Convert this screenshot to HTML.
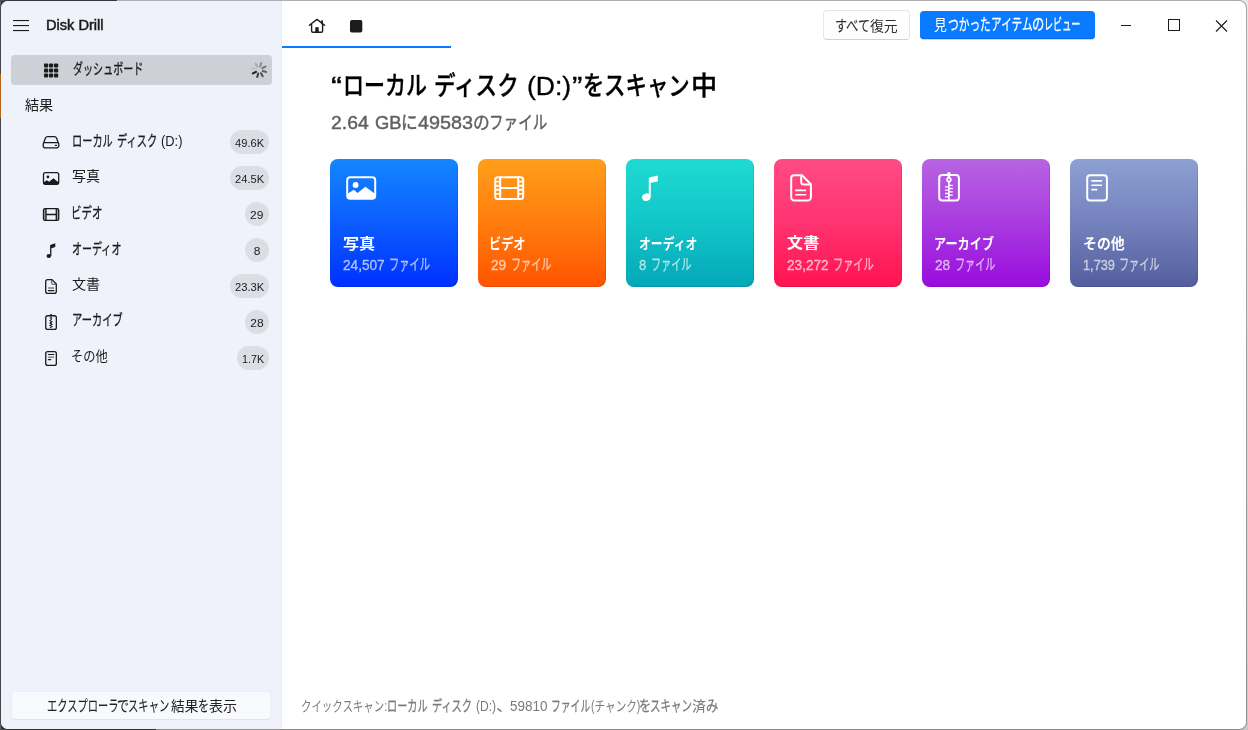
<!DOCTYPE html>
<html lang="ja">
<head>
<meta charset="utf-8">
<title>Disk Drill</title>
<style>
html,body{margin:0;padding:0}
body{width:1248px;height:730px;overflow:hidden;position:relative;background:linear-gradient(180deg,#e8e8e9,#c9c9c9);
 font-family:'Liberation Sans','Noto Sans CJK JP',sans-serif}
#frame-l{position:absolute;left:0;top:0;width:1px;height:730px;background:#5f6269}
#frame-o{position:absolute;left:0;top:74px;width:1px;height:44px;background:#f88a28}
#frame-t{position:absolute;left:0;top:0;width:117px;height:1px;background:#4c4e52}
#frame-c1{position:absolute;left:0;top:0;width:9px;height:9px;background:#3c3e42}
#frame-c2{position:absolute;left:0;top:721px;width:9px;height:9px;background:#36383b}
#frame-b{position:absolute;left:0;top:729px;width:156px;height:1px;background:#45474a}
#frame-b2{position:absolute;left:156px;top:729px;width:1092px;height:1px;background:#c4c4c4}
#frame-t2{position:absolute;left:117px;top:0;width:1120px;height:1px;background:#f0f0f0}
#app{position:absolute;left:0;top:0;width:1247px;height:730px;box-sizing:border-box;border:1px solid rgba(0,0,0,.27);border-radius:8px;overflow:hidden;background:#fff;background-clip:padding-box}
#app>*{position:absolute}
#side{left:0;top:0;width:280px;height:728px;background:#eff2fa}
#sep{left:280px;top:0;width:1px;height:728px;background:#ebebea}
.sel{left:10px;top:54px;width:261px;height:30px;border-radius:4px;background:#cdd0d6}
.pill{height:24px;border-radius:12px;background:#dcdee5}
.btn{box-sizing:border-box;border-radius:4px}
#b-exp{left:10px;top:689.5px;width:260px;height:29px;background:#f9fafd;border:1px solid #eceef4;border-bottom-color:#e2e4ea}
#b-all{left:822px;top:9px;width:87px;height:30px;background:#fefefe;border:1px solid #e6e6e6;border-bottom-color:#d2d2d2}
#b-rev{left:919px;top:10px;width:175px;height:28px;background:#0a7bff;box-shadow:inset 0 -1px 0 #0a6fe6, 0 1px 0 rgba(10,100,220,.25)}
#tabline{left:281px;top:45px;width:169px;height:2px;background:#0a78ff}
.card{top:158px;width:128px;height:128px;border-radius:8px;box-shadow:inset -1px -1px 0 rgba(0,0,60,.10)}
#c1{left:329px;background:linear-gradient(180deg,#1586ff 0%,#0b5dff 50%,#0030ff 100%)}
#c2{left:477px;background:linear-gradient(180deg,#ff9e1a 0%,#ff7d0e 50%,#ff5400 100%)}
#c3{left:625px;background:linear-gradient(180deg,#1fdad3 0%,#12c6c8 50%,#04a7b8 100%)}
#c4{left:773px;background:linear-gradient(180deg,#ff4c86 0%,#ff3370 50%,#ff1350 100%)}
#c5{left:921px;background:linear-gradient(180deg,#b764e2 0%,#a93be0 50%,#990cde 100%)}
#c6{left:1069px;background:linear-gradient(180deg,#8da0d3 0%,#7482bd 50%,#545e9f 100%)}
#ico{left:-1px;top:-1px;width:1248px;height:730px}
#text{left:-1px;top:-1px;width:1248px;height:730px;will-change:transform}
.t{position:absolute;white-space:pre;line-height:1;transform-origin:0 0;display:block}
</style>
</head>
<body>
<div id="frame-c1"></div><div id="frame-c2"></div><div id="frame-l"></div><div id="frame-o"></div><div id="frame-t"></div><div id="frame-b"></div><div id="frame-b2"></div><div id="frame-t2"></div>
<div id="app">
<div id="side"></div><div id="sep"></div>
<div class="sel"></div>
<div class="pill" style="left:229px;top:129px;width:39px"></div><div class="pill" style="left:229px;top:165px;width:39px"></div><div class="pill" style="left:244px;top:201px;width:24px"></div><div class="pill" style="left:244px;top:237px;width:24px"></div><div class="pill" style="left:229px;top:273px;width:39px"></div><div class="pill" style="left:244px;top:309px;width:24px"></div><div class="pill" style="left:236px;top:345px;width:32px"></div>
<div id="b-exp" class="btn"></div>
<div id="tabline"></div>
<div id="b-all" class="btn"></div>
<div id="b-rev" class="btn"></div>
<div id="c1" class="card"></div>
<div id="c2" class="card"></div>
<div id="c3" class="card"></div>
<div id="c4" class="card"></div>
<div id="c5" class="card"></div>
<div id="c6" class="card"></div>
<svg id="ico" width="1248" height="730" viewBox="0 0 1248 730">
<rect x="13" y="20" width="16" height="1.1" fill="#1b1b1b"/>
<rect x="13" y="25" width="16" height="1.1" fill="#1b1b1b"/>
<rect x="13" y="30" width="16" height="1.1" fill="#1b1b1b"/>
<rect x="44" y="63.4" width="4.2" height="4.2" rx="1" fill="#1b1b1b"/>
<rect x="44" y="68.4" width="4.2" height="4.2" rx="1" fill="#1b1b1b"/>
<rect x="44" y="73.4" width="4.2" height="4.2" rx="1" fill="#1b1b1b"/>
<rect x="49" y="63.4" width="4.2" height="4.2" rx="1" fill="#1b1b1b"/>
<rect x="49" y="68.4" width="4.2" height="4.2" rx="1" fill="#1b1b1b"/>
<rect x="49" y="73.4" width="4.2" height="4.2" rx="1" fill="#1b1b1b"/>
<rect x="54" y="63.4" width="4.2" height="4.2" rx="1" fill="#1b1b1b"/>
<rect x="54" y="68.4" width="4.2" height="4.2" rx="1" fill="#1b1b1b"/>
<rect x="54" y="73.4" width="4.2" height="4.2" rx="1" fill="#1b1b1b"/>
<line x1="262.76" y1="71.02" x2="266.12" y2="71.98" stroke="#606060" stroke-width="2.0" stroke-linecap="round"/>
<line x1="260.99" y1="73.24" x2="262.69" y2="76.30" stroke="#4f4f4f" stroke-width="2.0" stroke-linecap="round"/>
<line x1="258.18" y1="73.56" x2="257.22" y2="76.92" stroke="#3d3d3d" stroke-width="2.0" stroke-linecap="round"/>
<line x1="255.96" y1="71.79" x2="252.90" y2="73.49" stroke="#1f1f1f" stroke-width="2.0" stroke-linecap="round"/>
<line x1="255.64" y1="68.98" x2="252.28" y2="68.02" stroke="#c0c2c7" stroke-width="2.0" stroke-linecap="round"/>
<line x1="257.41" y1="66.76" x2="255.71" y2="63.70" stroke="#a8a8a8" stroke-width="2.0" stroke-linecap="round"/>
<line x1="260.22" y1="66.44" x2="261.18" y2="63.08" stroke="#8c8c8c" stroke-width="2.0" stroke-linecap="round"/>
<line x1="262.44" y1="68.21" x2="265.50" y2="66.51" stroke="#747474" stroke-width="2.0" stroke-linecap="round"/>
<path fill="none" stroke="#1b1b1b" stroke-width="1.3" stroke-linejoin="round" stroke-linecap="round" d="M47.7 136.7h6.6c1.1 0 1.9.6 2.3 1.6l1.9 4.9c.2.5.3 1 .3 1.5v.7a2.5 2.5 0 0 1-2.5 2.5h-10.6a2.5 2.5 0 0 1-2.5-2.5v-.7c0-.5.1-1 .3-1.5l1.9-4.9c.4-1 1.2-1.6 2.3-1.6zM43.9 142.6h14.2"/>
<path fill="none" stroke="#1b1b1b" stroke-width="1.3" stroke-linejoin="round" stroke-linecap="round" d="M55.3 145.4h1.2"/>
<rect fill="none" stroke="#1b1b1b" stroke-width="1.3" stroke-linejoin="round" stroke-linecap="round" x="43.5" y="172.6" width="15.2" height="11.7" rx="2"/>
<circle cx="47.9" cy="176.9" r="1.4" fill="#1b1b1b"/>
<path fill="#1b1b1b" d="M43.5 182.6L46.8 180.2L49.2 181.7L53.4 178.2L58.7 182.6V184.3H43.5Z"/>
<rect fill="none" stroke="#1b1b1b" stroke-width="1.3" stroke-linejoin="round" stroke-linecap="round" x="43.5" y="208.7" width="15.2" height="11.7" rx="1.5"/>
<path fill="none" stroke="#1b1b1b" stroke-width="1.3" stroke-linejoin="round" stroke-linecap="round" d="M46 208.7v11.7M56.3 208.7v11.7M46 214.5h10.3"/>
<path fill="#1b1b1b" fill-opacity=".38" d="M43.5 209h2.5v11h-2.5zM56.3 209h2.4v11h-2.4z"/>
<ellipse cx="48.8" cy="256" rx="2.3" ry="2" fill="#1b1b1b"/>
<path fill="#1b1b1b" d="M50.1 245L55.3 243.3V247L51.4 248.2V256H50.1Z"/>
<path fill="none" stroke="#1b1b1b" stroke-width="1.3" stroke-linejoin="round" stroke-linecap="round" d="M47.7 279.6H52L56.3 284V291.4a2 2 0 0 1-2 2H47.7a2 2 0 0 1-2-2V281.6a2 2 0 0 1 2-2z"/>
<path fill="none" stroke="#6a6a6a" stroke-width="1.3" d="M51.6 280V282.8a1.5 1.5 0 0 0 1.5 1.5H56"/>
<path fill="none" stroke="#7a7a7a" stroke-width="1.5" d="M48.2 288H54"/>
<path fill="none" stroke="#1b1b1b" stroke-width="1.2" stroke-linecap="round" d="M48.4 290.7H53.8"/>
<rect fill="none" stroke="#1b1b1b" stroke-width="1.3" stroke-linejoin="round" stroke-linecap="round" x="45.75" y="315.75" width="10.6" height="13.7" rx="2"/>
<circle cx="51" cy="315" r="1.1" fill="#1b1b1b"/>
<circle cx="51" cy="317.9" r="1.3" fill="#555"/>
<polyline fill="none" stroke="#1b1b1b" stroke-width="1.1" points="51.8,319.4 50,320.6 52,321.8 50,323 52,324.2 50,325.4 52,326.6 50,327.8"/>
<rect fill="none" stroke="#1b1b1b" stroke-width="1.3" stroke-linejoin="round" stroke-linecap="round" x="45.75" y="351.55" width="10.6" height="13.9" rx="2"/>
<path fill="none" stroke="#1b1b1b" stroke-width="1.2" stroke-linecap="round" d="M48.4 354.5H53.8M48.4 359.6H50.8"/>
<path fill="none" stroke="#8a8a8a" stroke-width="1.6" d="M48.2 357.2H54"/>
<path fill="none" stroke="#1b1b1b" stroke-width="1.4" stroke-linejoin="round" stroke-linecap="round" d="M309.4 25.3L317 19.4L324.6 25.3M311.6 24V31a1.3 1.3 0 0 0 1.3 1.3H321.3a1.3 1.3 0 0 0 1.3-1.3V24"/>
<rect x="315.3" y="27.2" width="3.4" height="5" fill="#1b1b1b"/>
<rect x="321.2" y="20.3" width="1.7" height="4" fill="#1b1b1b"/>
<rect x="350" y="20.1" width="12.3" height="12.5" rx="1.8" fill="#1c1c1c"/>
<rect x="1121" y="25" width="10" height="1" fill="#1b1b1b"/>
<rect x="1168.5" y="19.5" width="11" height="11" fill="none" stroke="#1b1b1b" stroke-width="1"/>
<path d="M1216 20.5L1227 31.5M1227 20.5L1216 31.5" fill="none" stroke="#1b1b1b" stroke-width="1.1"/>
<rect fill="none" stroke="#fff" stroke-width="2" stroke-linejoin="round" stroke-linecap="round" x="347.2" y="177.2" width="28" height="21.6" rx="3"/>
<circle cx="355.6" cy="185" r="2.9" fill="#fff"/>
<path fill="#fff" d="M347.5 193.8L353.9 189.8L357.5 192.9L365.4 186.8L375 193.8V198.5H347.5Z"/>
<rect fill="none" stroke="#fff" stroke-width="2" stroke-linejoin="round" stroke-linecap="round" x="495.2" y="177.2" width="28" height="21.7" rx="2.5"/>
<path fill="none" stroke="#fff" stroke-width="2" stroke-linejoin="round" stroke-linecap="round" d="M500.2 177.2v21.7M518.2 177.2v21.7M500.2 187.9h18"/>
<path fill="none" stroke="#fff" stroke-width="1.9" d="M495.5 181.6h4.5M518.5 181.6h4.5M495.5 185.7h4.5M518.5 185.7h4.5M495.5 189.8h4.5M518.5 189.8h4.5M495.5 193.9h4.5M518.5 193.9h4.5"/>
<ellipse cx="646.3" cy="197.2" rx="4.25" ry="3.65" fill="#fff" transform="rotate(-18 646.3 197.2)"/>
<path fill="#fff" d="M648.8 178.4q0-1 1-1.2L657.8 175.6V181.4L650.8 182.8V197H648.8Z"/>
<path fill="none" stroke="#fff" stroke-width="2" stroke-linejoin="round" stroke-linecap="round" d="M794.2 175.3H802L810.9 184.2V197.4a3 3 0 0 1-3 3H794.2a3 3 0 0 1-3-3V178.3a3 3 0 0 1 3-3z"/>
<path fill="none" stroke="#fff" stroke-width="2" stroke-linejoin="round" stroke-linecap="round" d="M801.2 175.6V182a2.5 2.5 0 0 0 2.5 2.5H810.6"/>
<path fill="none" stroke="#fff" stroke-width="1.6" d="M795.2 190.4H806.1M795.2 194.7H806.1"/>
<rect fill="none" stroke="#fff" stroke-width="2" stroke-linejoin="round" stroke-linecap="round" x="939.2" y="175" width="19.7" height="25.4" rx="3"/>
<circle cx="948.9" cy="173.7" r="1.7" fill="#fff"/>
<path fill="none" stroke="#fff" stroke-width="2.6" d="M948.9 175V178"/>
<circle cx="948.9" cy="179.8" r="1.9" fill="none" stroke="#fff" stroke-width="1.7"/>
<path fill="none" stroke="#fff" stroke-width="1.6" d="M948.9 182V200"/>
<path fill="none" stroke="#fff" stroke-width="1.3" d="M948.9 185.3H952.8M948.9 188.5H952.8M948.9 191.9H952.8M948.9 195.2H952.8M945 186.9H948.9M945 190.2H948.9M945 193.5H948.9M945 196.8H948.9"/>
<rect fill="none" stroke="#fff" stroke-width="2" stroke-linejoin="round" stroke-linecap="round" x="1087.2" y="175.3" width="19.7" height="25.1" rx="3"/>
<path fill="none" stroke="#fff" stroke-width="1.6" d="M1091.4 180.9H1102.1M1091.4 185.3H1102.1M1091.4 189.6H1097.2"/>
</svg>
<div id="text">
<span class="t" style="left:45.72px;top:17.95px;font-size:14px;font-weight:400;color:#1b1b1b;-webkit-text-stroke:0.5px;transform-origin:0 12px;transform:scale(1.0419,1.0000)">Disk Drill</span>
<span class="t" style="left:72.76px;top:61.66px;font-size:14px;font-weight:400;color:#1b1b1b;-webkit-text-stroke:0.25px;transform-origin:0 12px;transform:scale(0.7183,1.0900)">ダッシュボード</span>
<span class="t" style="left:25.29px;top:98.48px;font-size:14px;font-weight:400;color:#1b1b1b;transform-origin:0 12px;transform:scale(1.0089,1.0000)">結果</span>
<span class="t" style="left:71.62px;top:133.55px;font-size:14px;font-weight:400;color:#1b1b1b;-webkit-text-stroke:0.25px;transform-origin:0 12px;transform:scale(0.7283,1.0900)">ローカル</span>
<span class="t" style="left:117.17px;top:133.55px;font-size:14px;font-weight:400;color:#1b1b1b;-webkit-text-stroke:0.25px;transform-origin:0 12px;transform:scale(0.7330,1.0900)">ディスク</span>
<span class="t" style="left:161.04px;top:133.55px;font-size:14px;font-weight:400;color:#1b1b1b;transform-origin:0 12px;transform:scale(0.9200,1.0000)">(D:)</span>
<span class="t" style="left:71.59px;top:169.22px;font-size:14px;font-weight:400;color:#1b1b1b;transform-origin:0 12px;transform:scale(1.0035,1.0000)">写真</span>
<span class="t" style="left:71.16px;top:205.50px;font-size:14px;font-weight:400;color:#1b1b1b;-webkit-text-stroke:0.25px;transform-origin:0 12px;transform:scale(0.7459,1.0900)">ビデオ</span>
<span class="t" style="left:72.28px;top:241.85px;font-size:14px;font-weight:400;color:#1b1b1b;-webkit-text-stroke:0.25px;transform-origin:0 12px;transform:scale(0.7161,1.0900)">オーディオ</span>
<span class="t" style="left:71.90px;top:277.27px;font-size:14px;font-weight:400;color:#1b1b1b;transform-origin:0 12px;transform:scale(1.0047,1.0000)">文書</span>
<span class="t" style="left:71.81px;top:313.40px;font-size:14px;font-weight:400;color:#1b1b1b;-webkit-text-stroke:0.25px;transform-origin:0 12px;transform:scale(0.7335,1.0900)">アーカイブ</span>
<span class="t" style="left:71.19px;top:349.37px;font-size:14px;font-weight:400;color:#1b1b1b;transform-origin:0 12px;transform:scale(0.8750,1.0000)">その他</span>
<span class="t" style="left:234.77px;top:136.76px;font-size:12px;font-weight:400;color:#1b1b1b;transform-origin:0 10px;transform:scale(0.9274,0.9600)">49.6K</span>
<span class="t" style="left:235.04px;top:172.76px;font-size:12px;font-weight:400;color:#1b1b1b;transform-origin:0 10px;transform:scale(0.9282,0.9600)">24.5K</span>
<span class="t" style="left:250.21px;top:208.76px;font-size:12px;font-weight:400;color:#1b1b1b;transform-origin:0 10px;transform:scale(0.9991,0.9600)">29</span>
<span class="t" style="left:253.75px;top:244.76px;font-size:12px;font-weight:400;color:#1b1b1b;transform-origin:0 10px;transform:scale(1.0000,0.9600)">8</span>
<span class="t" style="left:234.53px;top:280.62px;font-size:12px;font-weight:400;color:#1b1b1b;transform-origin:0 10px;transform:scale(0.9350,0.9600)">23.3K</span>
<span class="t" style="left:250.25px;top:316.59px;font-size:12px;font-weight:400;color:#1b1b1b;transform-origin:0 10px;transform:scale(1.0000,0.9600)">28</span>
<span class="t" style="left:242.11px;top:352.76px;font-size:12px;font-weight:400;color:#1b1b1b;transform-origin:0 10px;transform:scale(0.8973,0.9600)">1.7K</span>
<span class="t" style="left:46.77px;top:698.76px;font-size:14px;font-weight:400;color:#222222;-webkit-text-stroke:0.1px;transform-origin:0 12px;transform:scale(0.7316,1.0900)">エクスプローラ</span>
<span class="t" style="left:117.15px;top:698.76px;font-size:14px;font-weight:400;color:#222222;-webkit-text-stroke:0.1px;transform-origin:0 12px;transform:scale(0.8542,1.0900)">で</span>
<span class="t" style="left:128.04px;top:698.76px;font-size:14px;font-weight:400;color:#222222;-webkit-text-stroke:0.1px;transform-origin:0 12px;transform:scale(0.7372,1.0900)">スキャン</span>
<span class="t" style="left:170.87px;top:698.76px;font-size:14px;font-weight:400;color:#222222;transform-origin:0 12px;transform:scale(0.9749,1.0000)">結果</span>
<span class="t" style="left:198.08px;top:698.76px;font-size:14px;font-weight:400;color:#222222;-webkit-text-stroke:0.1px;transform-origin:0 12px;transform:scale(0.7872,1.0900)">を</span>
<span class="t" style="left:209.00px;top:698.76px;font-size:14px;font-weight:400;color:#222222;transform-origin:0 12px;transform:scale(1.0000,1.0000)">表示</span>
<span class="t" style="left:835.26px;top:18.58px;font-size:14px;font-weight:400;color:#2e2e2e;-webkit-text-stroke:0.1px;transform-origin:0 12px;transform:scale(0.8683,1.0900)">すべて</span>
<span class="t" style="left:869.75px;top:18.58px;font-size:14px;font-weight:400;color:#2e2e2e;transform-origin:0 12px;transform:scale(0.9908,1.0000)">復元</span>
<span class="t" style="left:934.41px;top:17.53px;font-size:14px;font-weight:400;color:#ffffff;transform-origin:0 12px;transform:scale(0.9168,1.0400)">見</span>
<span class="t" style="left:948.23px;top:17.53px;font-size:14px;font-weight:400;color:#ffffff;-webkit-text-stroke:0.25px;transform-origin:0 12px;transform:scale(0.7648,1.1128)">つかった</span>
<span class="t" style="left:990.66px;top:17.53px;font-size:14px;font-weight:400;color:#ffffff;-webkit-text-stroke:0.25px;transform-origin:0 12px;transform:scale(0.7617,1.1128)">アイテム</span>
<span class="t" style="left:1032.14px;top:17.53px;font-size:14px;font-weight:400;color:#ffffff;-webkit-text-stroke:0.25px;transform-origin:0 12px;transform:scale(0.8788,1.1128)">の</span>
<span class="t" style="left:1044.05px;top:17.53px;font-size:14px;font-weight:400;color:#ffffff;-webkit-text-stroke:0.25px;transform-origin:0 12px;transform:scale(0.6489,1.1128)">レビュー</span>
<span class="t" style="left:331.30px;top:72.62px;font-size:26px;font-weight:500;color:#000000;-webkit-text-stroke:0.35px;transform-origin:0 22px;transform:scale(1.2686,1.0000)">“</span>
<span class="t" style="left:343.37px;top:72.62px;font-size:26px;font-weight:500;color:#000000;-webkit-text-stroke:0.35px;transform-origin:0 22px;transform:scale(0.8072,1.0000)">ローカル</span>
<span class="t" style="left:434.42px;top:72.62px;font-size:26px;font-weight:500;color:#000000;-webkit-text-stroke:0.35px;transform-origin:0 22px;transform:scale(0.8287,1.0000)">ディスク</span>
<span class="t" style="left:526.92px;top:72.62px;font-size:26px;font-weight:400;color:#000000;-webkit-text-stroke:0.35px;transform-origin:0 22px;transform:scale(1.0202,1.0000)">(D:)</span>
<span class="t" style="left:571.70px;top:72.62px;font-size:26px;font-weight:500;color:#000000;-webkit-text-stroke:0.35px;transform-origin:0 22px;transform:scale(1.2000,1.0000)">”</span>
<span class="t" style="left:582.97px;top:72.62px;font-size:26px;font-weight:500;color:#000000;-webkit-text-stroke:0.35px;transform-origin:0 22px;transform:scale(0.8140,1.0000)">を</span>
<span class="t" style="left:604.40px;top:72.62px;font-size:26px;font-weight:500;color:#000000;-webkit-text-stroke:0.35px;transform-origin:0 22px;transform:scale(0.8251,1.0000)">スキャン</span>
<span class="t" style="left:690.86px;top:72.62px;font-size:26px;font-weight:500;color:#000000;-webkit-text-stroke:0.35px;transform-origin:0 22px;transform:scale(1.0063,1.0000)">中</span>
<span class="t" style="left:331.40px;top:114.32px;font-size:18px;font-weight:400;color:#606060;-webkit-text-stroke:0.4px;transform-origin:0 15px;transform:scale(1.0746,1.0300)">2.64</span>
<span class="t" style="left:375.23px;top:114.32px;font-size:18px;font-weight:400;color:#606060;-webkit-text-stroke:0.4px;transform-origin:0 15px;transform:scale(1.0204,1.0300)">GB</span>
<span class="t" style="left:400.64px;top:114.32px;font-size:18px;font-weight:400;color:#606060;-webkit-text-stroke:0.4px;transform-origin:0 15px;transform:scale(0.9310,1.0300)">に</span>
<span class="t" style="left:417.68px;top:114.32px;font-size:18px;font-weight:400;color:#606060;-webkit-text-stroke:0.4px;transform-origin:0 15px;transform:scale(1.0990,1.0300)">49583</span>
<span class="t" style="left:472.70px;top:114.32px;font-size:18px;font-weight:400;color:#606060;-webkit-text-stroke:0.4px;transform-origin:0 15px;transform:scale(0.9333,1.0300)">の</span>
<span class="t" style="left:489.25px;top:114.32px;font-size:18px;font-weight:400;color:#606060;-webkit-text-stroke:0.4px;transform-origin:0 15px;transform:scale(0.8096,1.0300)">ファイル</span>
<span class="t" style="left:343.00px;top:235.55px;font-size:15px;font-weight:700;color:#ffffff;transform-origin:0 13px;transform:scale(1.0719,0.9700)">写真</span>
<span class="t" style="left:342.91px;top:257.83px;font-size:14px;font-weight:400;color:rgba(255,255,255,0.6);-webkit-text-stroke:0.3px;transform-origin:0 12px;transform:scale(0.9725,1.0200)">24,507</span>
<span class="t" style="left:388.97px;top:257.83px;font-size:14px;font-weight:400;color:rgba(255,255,255,0.6);-webkit-text-stroke:0.3px;transform-origin:0 12px;transform:scale(0.7321,1.1016)">ファイル</span>
<span class="t" style="left:489.29px;top:235.97px;font-size:15px;font-weight:700;color:#ffffff;transform-origin:0 13px;transform:scale(0.8116,0.9700)">ビデオ</span>
<span class="t" style="left:490.96px;top:257.77px;font-size:14px;font-weight:400;color:rgba(255,255,255,0.6);-webkit-text-stroke:0.3px;transform-origin:0 12px;transform:scale(0.9784,1.0200)">29</span>
<span class="t" style="left:510.74px;top:257.77px;font-size:14px;font-weight:400;color:rgba(255,255,255,0.6);-webkit-text-stroke:0.3px;transform-origin:0 12px;transform:scale(0.7209,1.1016)">ファイル</span>
<span class="t" style="left:638.96px;top:235.91px;font-size:15px;font-weight:700;color:#ffffff;transform-origin:0 13px;transform:scale(0.7902,0.9700)">オーディオ</span>
<span class="t" style="left:639.42px;top:257.77px;font-size:14px;font-weight:400;color:rgba(255,255,255,0.6);-webkit-text-stroke:0.3px;transform-origin:0 12px;transform:scale(0.9334,1.0200)">8</span>
<span class="t" style="left:650.98px;top:257.77px;font-size:14px;font-weight:400;color:rgba(255,255,255,0.6);-webkit-text-stroke:0.3px;transform-origin:0 12px;transform:scale(0.7225,1.1016)">ファイル</span>
<span class="t" style="left:787.49px;top:235.18px;font-size:15px;font-weight:700;color:#ffffff;transform-origin:0 13px;transform:scale(1.0756,0.9700)">文書</span>
<span class="t" style="left:786.91px;top:257.83px;font-size:14px;font-weight:400;color:rgba(255,255,255,0.6);-webkit-text-stroke:0.3px;transform-origin:0 12px;transform:scale(0.9725,1.0200)">23,272</span>
<span class="t" style="left:832.96px;top:257.83px;font-size:14px;font-weight:400;color:rgba(255,255,255,0.6);-webkit-text-stroke:0.3px;transform-origin:0 12px;transform:scale(0.7263,1.1016)">ファイル</span>
<span class="t" style="left:934.33px;top:236.20px;font-size:15px;font-weight:700;color:#ffffff;transform-origin:0 13px;transform:scale(0.8104,0.9700)">アーカイブ</span>
<span class="t" style="left:934.99px;top:257.77px;font-size:14px;font-weight:400;color:rgba(255,255,255,0.6);-webkit-text-stroke:0.3px;transform-origin:0 12px;transform:scale(0.9761,1.0200)">28</span>
<span class="t" style="left:954.74px;top:257.77px;font-size:14px;font-weight:400;color:rgba(255,255,255,0.6);-webkit-text-stroke:0.3px;transform-origin:0 12px;transform:scale(0.7209,1.1016)">ファイル</span>
<span class="t" style="left:1082.59px;top:235.59px;font-size:15px;font-weight:700;color:#ffffff;transform-origin:0 13px;transform:scale(0.9253,0.9700)">その他</span>
<span class="t" style="left:1083.03px;top:257.80px;font-size:14px;font-weight:400;color:rgba(255,255,255,0.6);-webkit-text-stroke:0.3px;transform-origin:0 12px;transform:scale(0.9127,1.0200)">1,739</span>
<span class="t" style="left:1119.40px;top:257.80px;font-size:14px;font-weight:400;color:rgba(255,255,255,0.6);-webkit-text-stroke:0.3px;transform-origin:0 12px;transform:scale(0.7225,1.1016)">ファイル</span>
<span class="t" style="left:300.92px;top:698.83px;font-size:14px;font-weight:400;color:#7a7a7a;transform-origin:0 12px;transform:scale(0.7455,1.0000)">クイックスキャン:</span>
<span class="t" style="left:386.73px;top:698.83px;font-size:14px;font-weight:400;color:#7a7a7a;-webkit-text-stroke:0.25px;transform-origin:0 12px;transform:scale(0.7256,1.0900)">ローカル</span>
<span class="t" style="left:432.09px;top:698.83px;font-size:14px;font-weight:400;color:#7a7a7a;-webkit-text-stroke:0.25px;transform-origin:0 12px;transform:scale(0.7259,1.0900)">ディスク</span>
<span class="t" style="left:475.60px;top:698.83px;font-size:14px;font-weight:400;color:#7a7a7a;transform-origin:0 12px;transform:scale(0.8621,1.0000)">(D:)</span>
<span class="t" style="left:496.31px;top:698.83px;font-size:14px;font-weight:400;color:#7a7a7a;transform-origin:0 12px;transform:scale(1.2456,1.0000)">、</span>
<span class="t" style="left:510.02px;top:698.83px;font-size:14px;font-weight:400;color:#7a7a7a;transform-origin:0 12px;transform:scale(0.9605,1.0000)">59810</span>
<span class="t" style="left:551.47px;top:698.83px;font-size:14px;font-weight:400;color:#7a7a7a;-webkit-text-stroke:0.25px;transform-origin:0 12px;transform:scale(0.7005,1.0900)">ファイル</span>
<span class="t" style="left:590.85px;top:698.83px;font-size:14px;font-weight:400;color:#7a7a7a;transform-origin:0 12px;transform:scale(0.7578,1.0000)">(チャンク)</span>
<span class="t" style="left:639.44px;top:698.83px;font-size:14px;font-weight:400;color:#7a7a7a;-webkit-text-stroke:0.25px;transform-origin:0 12px;transform:scale(0.8595,1.0900)">を</span>
<span class="t" style="left:649.90px;top:698.83px;font-size:14px;font-weight:400;color:#7a7a7a;-webkit-text-stroke:0.25px;transform-origin:0 12px;transform:scale(0.7491,1.0900)">スキャン</span>
<span class="t" style="left:692.03px;top:698.83px;font-size:14px;font-weight:400;color:#7a7a7a;transform-origin:0 12px;transform:scale(1.0004,1.0000)">済</span>
<span class="t" style="left:706.25px;top:698.83px;font-size:14px;font-weight:400;color:#7a7a7a;-webkit-text-stroke:0.25px;transform-origin:0 12px;transform:scale(0.8826,1.0900)">み</span>
</div>
</div>
</body>
</html>
